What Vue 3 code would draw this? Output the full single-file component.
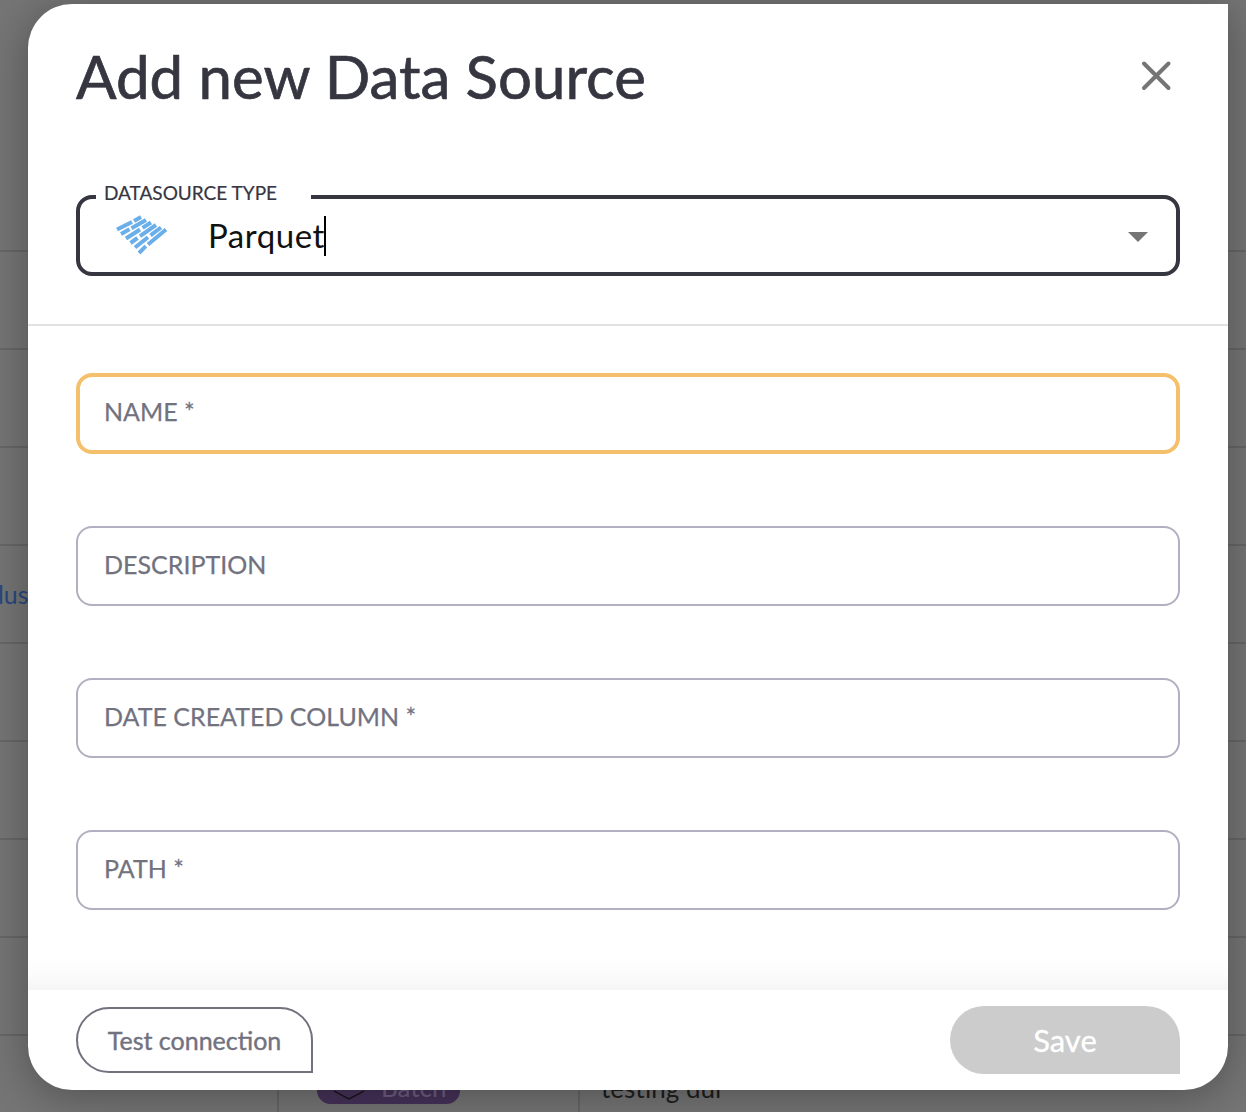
<template>
  <div class="page">
    <!-- table behind the dialog -->
    <div class="backdrop">
      <div class="bg-head"></div>
      <div v-for="r in 8" :key="r" class="bg-row">
        <span v-if="r === 4" class="bg-link">Plus</span>
      </div>
      <div class="bg-row last">
        <div class="bg-col first"></div>
        <div class="bg-col second">
          <span class="bg-pill">
            <svg width="36" height="27" viewBox="0 0 36 27" fill="none" stroke="#111" stroke-width="1.4">
              <path d="M3 14 L18 22 L33 14" />
            </svg>
            <span class="bg-pill-label">Batch</span>
          </span>
        </div>
        <div class="bg-col third">testing dui</div>
      </div>
    </div>

    <div class="modal">
      <header class="modal-head">
        <h1 class="title">Add new Data Source</h1>
        <button class="close" aria-label="close">
          <svg width="32" height="32" viewBox="0 0 32 32" fill="none" stroke="#757575" stroke-width="4" stroke-linecap="round">
            <path d="M4 4.500 L28.500 29 M28.500 4.500 L4 29" />
          </svg>
        </button>
      </header>

      <section class="type-section">
        <fieldset class="type-box">
          <legend class="type-legend">DATASOURCE TYPE</legend>
          <svg class="parquet" width="52" height="42" viewBox="0 0 52 42">
            <g stroke="#6aaeea" stroke-width="4" fill="none">
              <path d="M2 15.500 L17 8 M19 7 L26 3" />
              <path d="M6 20 L14.500 15.300 M16.500 14.200 L31 6" />
              <path d="M11 24.500 L25 15.500 M27.500 13.900 L36 8.500" />
              <path d="M15.500 29 L22.500 24 M25 22.200 L41 11" />
              <path d="M20 33.500 L33 23.300 M35.500 21.400 L46 13.500" />
              <path d="M24 39 L30.800 32.200 M33 30.500 L51 15.500" />
            </g>
          </svg>
          <span class="type-value">Parquet</span>
          <span class="caret"></span>
          <svg class="arrow" width="20" height="10" viewBox="0 0 20 10"><path d="M0 0 H20 L10 10 Z" fill="#757575" /></svg>
        </fieldset>
      </section>

      <section class="fields">
        <div v-for="(f, i) in fields" :key="f" class="field" :class="{ focused: i === 0 }">{{ f }}</div>
      </section>

      <footer class="modal-foot">
        <button class="btn-test">Test connection</button>
        <button class="btn-save">Save</button>
      </footer>
    </div>
  </div>
</template>

<script setup>
const fields = ['NAME *', 'DESCRIPTION', 'DATE CREATED COLUMN *', 'PATH *']
</script>

<style>
html, body { margin: 0; background: #757575; }
</style>

<style scoped>
.page {
  position: relative;
  width: 1246px;
  height: 1112px;
  overflow: hidden;
  background: #757575;
  font-family: Lato, "Noto Sans", sans-serif;
}

.backdrop {
  display: flex;
  flex-direction: column;
  height: 100%;
}
.bg-head { height: 252px; flex-shrink: 0; border-bottom: 2px solid #666; box-sizing: border-box; }
.bg-row {
  height: 98px;
  flex-shrink: 0;
  box-sizing: border-box;
  border-bottom: 2px solid #666;
  display: flex;
  align-items: center;
}
.bg-row.last { border-bottom: none; height: 76px; }
.bg-link { margin-left: -17px; font-size: 25px; color: #27497f; }
.bg-col { height: 100%; box-sizing: border-box; border-right: 2px solid #666; }
.bg-col.first { width: 279px; }
.bg-col.second { width: 301px; padding: 41px 0 0 38px; }
.bg-col.third { border-right: none; padding: 37px 0 0 21px; font-size: 26px; color: #1e1e1e; line-height: 30px; }
.bg-pill {
  display: flex;
  align-items: center;
  gap: 14px;
  width: 143px;
  height: 27px;
  box-sizing: border-box;
  padding-left: 14px;
  border-radius: 14px;
  background: #46325a;
  color: #6f5f82;
  font-size: 26px;
}
.bg-pill-label { line-height: 20px; margin-top: -8px; }

.modal {
  position: absolute;
  left: 28px;
  top: 4px;
  width: 1200px;
  height: 1086px;
  box-sizing: border-box;
  display: flex;
  flex-direction: column;
  background: #fff;
  border-radius: 44px 0 44px 44px;
  box-shadow: 0 6px 44px rgba(0, 0, 0, 0.32);
}

.modal-head {
  display: flex;
  justify-content: space-between;
  align-items: flex-start;
  padding: 35px 56px 0 48px;
  height: 190px;
  flex-shrink: 0;
  box-sizing: border-box;
}
.title {
  margin: 0;
  font-size: 60px;
  line-height: 74px;
  font-weight: 400;
  -webkit-text-stroke: 0.7px #363641;
  color: #363641;
}
.close {
  margin-top: 20px;
  padding: 0;
  width: 32px;
  height: 32px;
  border: none;
  background: none;
}

.type-section {
  padding: 0 48px;
  height: 132px;
  flex-shrink: 0;
  box-sizing: border-box;
  border-bottom: 2px solid #e2e2e2;
}
.type-box {
  position: relative;
  margin: -9px 0 0;
  padding: 0 0 0 36px;
  height: 91px;
  box-sizing: border-box;
  display: flex;
  align-items: center;
  border: 4px solid #363641;
  border-radius: 16px;
}
.type-legend {
  position: relative;
  top: -4px;
  margin-left: -20px;
  padding: 0 8px;
  width: 215px;
  box-sizing: border-box;
  font-size: 19px;
  line-height: 24px;
  color: #363641;
  font-weight: 400;
  -webkit-text-stroke: 0.2px #363641;
}
.parquet { margin: -11px 0 0 -1px; flex-shrink: 0; }
.type-value {
  margin: -11px 0 0 41px;
  font-size: 33px;
  line-height: 40px;
  letter-spacing: 0.55px;
  color: #111;
}
.caret {
  width: 2px;
  height: 40px;
  margin: -9px 0 0 -1px;
  background: #000;
}
.arrow { position: absolute; right: 28px; top: 23px; }

.fields {
  flex: 1;
  display: flex;
  flex-direction: column;
  gap: 72px;
  padding: 47px 48px 0;
  background: linear-gradient(#fff calc(100% - 34px), #fbfbfb calc(100% - 14px), #f5f5f5);
}
.field {
  height: 80px;
  flex-shrink: 0;
  box-sizing: border-box;
  display: flex;
  align-items: center;
  padding: 0 0 5px 26px;
  border: 2px solid #b0b0c2;
  border-radius: 16px;
  font-size: 25px;
  color: #72727f;
  -webkit-text-stroke: 0.25px #72727f;
}
.field.focused {
  height: 81px;
  border: 4px solid #f5c06c;
  padding-left: 24px;
}

.modal-foot {
  height: 100px;
  flex-shrink: 0;
  box-sizing: border-box;
  display: flex;
  justify-content: space-between;
  align-items: flex-start;
  padding: 16px 48px 0;
}
.btn-test {
  width: 237px;
  height: 66px;
  margin-top: 1px;
  border: 2px solid #72727f;
  border-radius: 33px 33px 0 33px;
  background: #fff;
  color: #72727f;
  font-family: inherit;
  font-size: 25px;
  -webkit-text-stroke: 0.4px #72727f;
}
.btn-save {
  width: 230px;
  height: 68px;
  border: none;
  border-radius: 34px 34px 0 34px;
  background: #ccc;
  color: #fff;
  font-family: inherit;
  font-size: 31px;
  -webkit-text-stroke: 0.3px #fff;
}
</style>
